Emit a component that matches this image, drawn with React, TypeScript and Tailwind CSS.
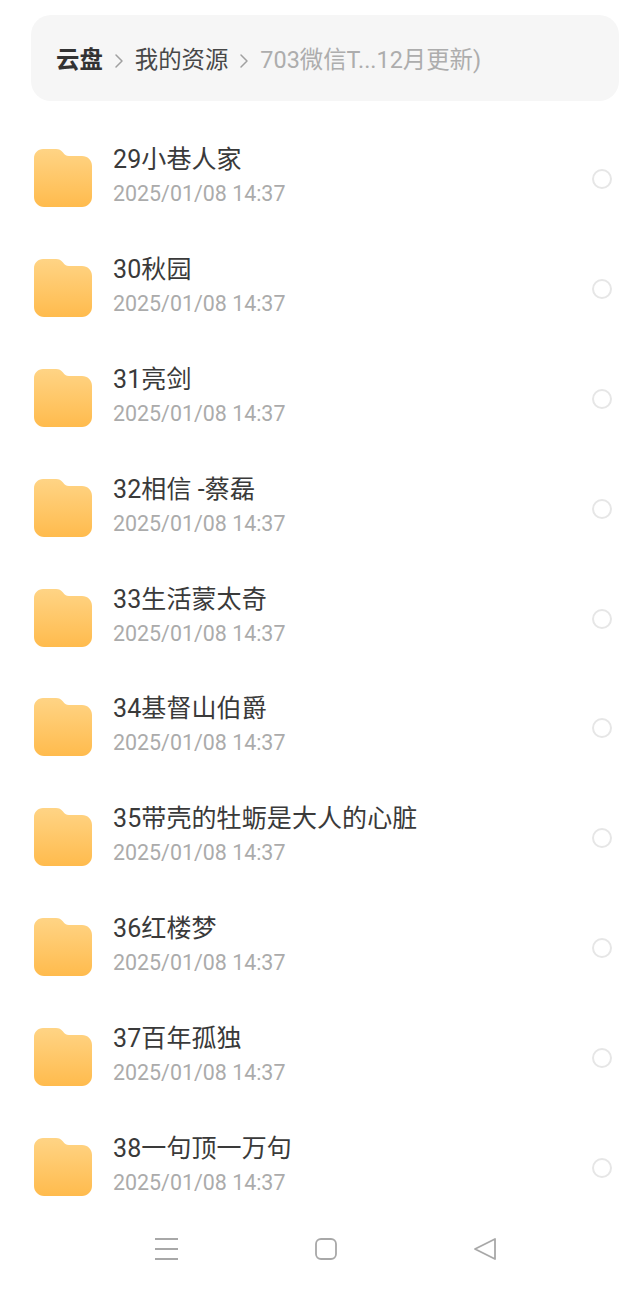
const FOLDERS = [
  "29小巷人家",
  "30秋园",
  "31亮剑",
  "32相信 -蔡磊",
  "33生活蒙太奇",
  "34基督山伯爵",
  "35带壳的牡蛎是大人的心脏",
  "36红楼梦",
  "37百年孤独",
  "38一句顶一万句",
];

const FONT = "font-['Roboto','Noto_Sans_CJK_SC',sans-serif]";

function Chevron() {
  return (
    <svg width="10" height="16" viewBox="0 0 10 16" fill="none" className="shrink-0">
      <path d="M2 2l6 6-6 6" stroke="#a0a0a0" strokeWidth="1.500" strokeLinecap="round" strokeLinejoin="round" />
    </svg>
  );
}

function FolderIcon() {
  return (
    <svg width="58" height="58" viewBox="0 0 58 58" className="mb-[2px] shrink-0">
      <defs>
        <linearGradient id="folderFill" x1="0" y1="0" x2="0" y2="1">
          <stop offset="0" stopColor="#ffd485" />
          <stop offset="1" stopColor="#ffbb4d" />
        </linearGradient>
      </defs>
      <path
        d="M9 0h13c3 0 5 1 7 3.500 1.500 2 3 3.500 6 3.500h13c5.500 0 10 4 10 10v31c0 5.500-4.500 10-10 10H10c-5.500 0-10-4.500-10-10V9c0-5 4-9 9-9z"
        fill="url(#folderFill)"
      />
    </svg>
  );
}

function FolderRow({ name }: { name: string }) {
  return (
    <div className="flex h-[109.900px] items-center pl-[34px] pr-[24px]">
      <FolderIcon />
      <div className="mb-[4px] ml-[21px] flex min-w-0 flex-1 flex-col">
        <span className="text-[25px] leading-[34px] tracking-[0.1px] text-[#3a3a3a]">{name}</span>
        <span className="text-[21.400px] leading-[34px] text-[#ababab]">2025/01/08 14:37</span>
      </div>
      <span className="h-[20px] w-[20px] shrink-0 rounded-full border-[2px] border-[#e6e6e6]" />
    </div>
  );
}

export default function App() {
  return (
    <div className={`${FONT} flex h-[1290px] w-[636px] flex-col overflow-hidden bg-white`}>
      <div className="mt-[15px] ml-[31px] flex h-[86px] w-[588px] items-center rounded-[20px] bg-[#f6f6f6] pl-[25px] pt-[5px] text-[23.400px]">
        <span className="font-bold text-[#333333]">云盘</span>
        <span className="mx-[11px]">
          <Chevron />
        </span>
        <span className="text-[#484848]">我的资源</span>
        <span className="mx-[11px]">
          <Chevron />
        </span>
        <span className="text-[#adadad]">703微信T...12月更新)</span>
      </div>
      <div className="mt-[23px] flex flex-col">
        {FOLDERS.map((name) => (
          <FolderRow key={name} name={name} />
        ))}
      </div>
      <div className="flex flex-1 items-start gap-[137px] pl-[155px] pt-[15px]">
        <svg width="23" height="22" viewBox="0 0 23 22" fill="none" stroke="#a8a8a8" strokeWidth="1.800">
          <path d="M0 1h23M0 11h23M0 21h23" />
        </svg>
        <svg width="22" height="22" viewBox="0 0 22 22" fill="none" stroke="#a8a8a8" strokeWidth="1.800">
          <rect x="1" y="1" width="20" height="20" rx="5" />
        </svg>
        <svg width="22" height="22" viewBox="0 0 22 22" fill="none" stroke="#a8a8a8" strokeWidth="1.800" strokeLinejoin="round">
          <path d="M1 11L21 1v20z" />
        </svg>
      </div>
    </div>
  );
}
